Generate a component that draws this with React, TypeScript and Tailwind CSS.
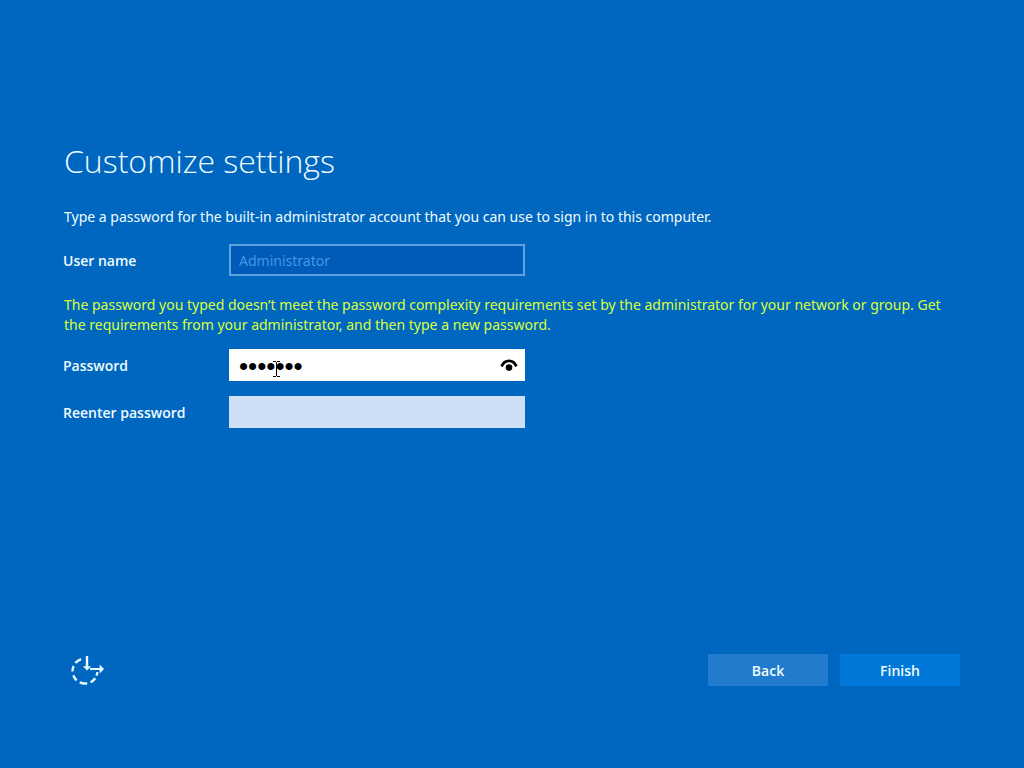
import React, { useState } from 'react';

const EaseOfAccessIcon = () => (
  <svg viewBox="0 0 34 32" className="h-8 w-[34px]" fill="none" stroke="#e6fbff" strokeWidth="2.4" aria-hidden="true">
    <path d="M11.1 5.1A12.5 12.5 0 0 0 5.4 9" />
    <path d="M3.6 11.9A12.5 12.5 0 0 0 2.5 17.4" />
    <path d="M3.3 21.3A12.5 12.5 0 0 0 6.6 26.3" />
    <path d="M9.7 28.3A12.5 12.5 0 0 0 17.2 29.3" />
    <path d="M20.6 28.2A12.5 12.5 0 0 0 25.2 24.2" />
    <path d="M26.5 21.6A12.5 12.5 0 0 0 27.4 18.2" />
    <path d="M17 2v12" />
    <path d="M13 12.2h8L17 16.6z" fill="#e6fbff" stroke="none" />
    <path d="M20 15H31" strokeWidth="2" />
    <path d="M29.6 10.6l4.4 4.4-4.4 4.4z" fill="#e6fbff" stroke="none" />
  </svg>
);

const RevealIcon = () => (
  <svg viewBox="0 0 18 14" className="h-[14px] w-[18px]" aria-hidden="true">
    <path d="M1.6 8.4C4.6 1 13.4 1 16.4 8.4" fill="none" stroke="#000" strokeWidth="2.8" />
    <circle cx="9" cy="9.6" r="3.3" fill="#000" />
  </svg>
);

const TextCursor = () => (
  <svg viewBox="0 0 7 16" className="pointer-events-none absolute top-3 left-11 h-4 w-[7px]" aria-hidden="true">
    <path d="M0 .5h3M4 .5h3M3.5 1v14M0 15.5h3M4 15.5h3" fill="none" stroke="#000" />
  </svg>
);

const labelClass = "w-[166px] shrink-0 -ml-px pt-px font-['Open_Sans',sans-serif] text-sm font-semibold";

const App = () => {
  const [password, setPassword] = useState('Passwor');
  const [reentered, setReentered] = useState('');
  const [visible, setVisible] = useState(false);

  return (
    <form
      className="flex min-h-screen flex-col bg-[#0067c0] px-16 pt-[137px] pb-[82px] font-['Noto_Sans','Open_Sans',sans-serif] text-sm text-[#f0fcff]"
      onSubmit={(e) => e.preventDefault()}
    >
      <main>
        <h1 className="font-['Open_Sans',sans-serif] text-[32px] leading-[48px] font-light">Customize settings</h1>
        <p className="mt-[22px] leading-5">
          Type a password for the built-in administrator account that you can use to sign in to this computer.
        </p>

        <div className="mt-[17px] flex items-center">
          <label htmlFor="username" className={labelClass}>User name</label>
          <input
            id="username"
            type="text"
            value="Administrator"
            disabled
            className="h-8 w-[296px] border-2 border-[#5ba3e3] bg-[#005ab8] px-2 text-[#4797e4]"
          />
        </div>

        <p className="mt-[19px] leading-5 text-[#d8ff3c]" role="alert">
          The password you typed doesn’t meet the password complexity requirements set by the administrator for your
          network or group. Get the requirements from your administrator, and then type a new password.
        </p>

        <div className="mt-[14px] flex items-center">
          <label htmlFor="password" className={labelClass}>Password</label>
          <div className="relative flex h-8 w-[296px] items-center bg-white">
            <input
              id="password"
              type={visible ? 'text' : 'password'}
              value={password}
              onChange={(e) => setPassword(e.target.value)}
              className={`h-8 min-w-0 flex-1 pl-[10px] text-black outline-none ${
                visible ? 'text-sm' : "pt-1 font-['Liberation_Sans',sans-serif] text-[26px]"
              }`}
            />
            <button
              type="button"
              aria-label="Show password"
              onClick={() => setVisible(!visible)}
              className="flex h-8 w-8 items-center justify-center"
            >
              <RevealIcon />
            </button>
            <TextCursor />
          </div>
        </div>

        <div className="mt-[15px] flex items-center">
          <label htmlFor="reenter" className={labelClass}>Reenter password</label>
          <input
            id="reenter"
            type="password"
            value={reentered}
            onChange={(e) => setReentered(e.target.value)}
            className="h-8 w-[296px] bg-[#ccdff4] px-[10px] text-black outline-none"
          />
        </div>
      </main>

      <footer className="mt-auto flex items-center justify-between">
        <button type="button" aria-label="Ease of access" className="ml-[6px]">
          <EaseOfAccessIcon />
        </button>
        <div className="flex gap-3 font-['Open_Sans',sans-serif] font-semibold">
          <button type="button" className="h-8 w-[120px] bg-[#217ccd] pt-0.5">Back</button>
          <button type="submit" className="h-8 w-[120px] bg-[#0078d9] pt-0.5">Finish</button>
        </div>
      </footer>
    </form>
  );
};

export default App;
